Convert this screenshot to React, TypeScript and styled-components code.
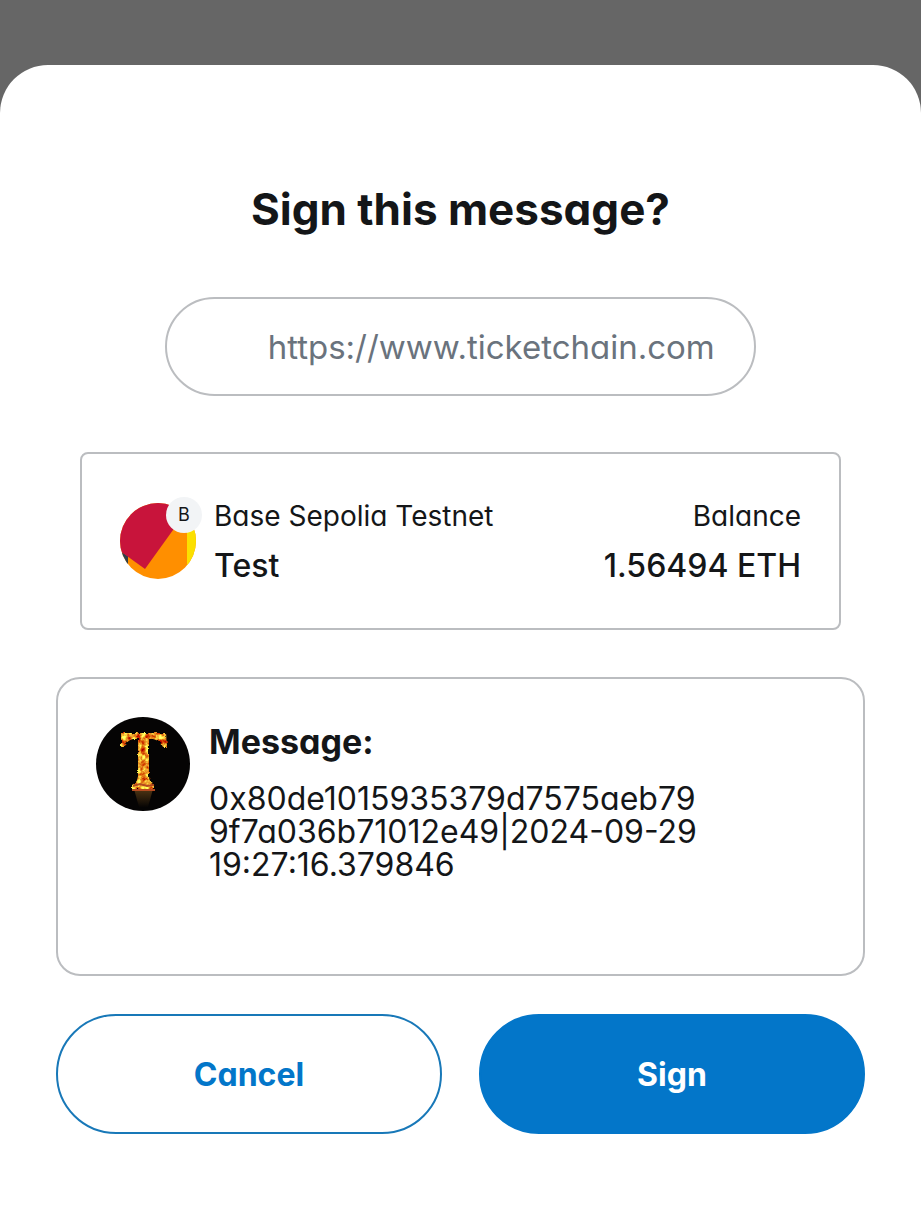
import styled, { createGlobalStyle } from "styled-components";

const GlobalStyle = createGlobalStyle`
  * { box-sizing: border-box; }
  body {
    margin: 0;
    background: #666666;
    color: #141618;
    font-family: Inter, "Liberation Sans", sans-serif;
    font-feature-settings: "cv11";
  }
`;

const Sheet = styled.main`
  display: flex;
  flex-direction: column;
  min-height: calc(100vh - 65px);
  margin-top: 65px;
  padding: 116px 56px 74px;
  background: #ffffff;
  border-radius: 48px 48px 0 0;
`;

const Title = styled.h1`
  margin: 0;
  font-size: 44px;
  line-height: 56px;
  font-weight: 700;
  text-align: center;
`;

const Origin = styled.div`
  align-self: center;
  width: 73%;
  height: 99px;
  margin-top: 60px;
  padding-right: 39px;
  display: flex;
  align-items: center;
  justify-content: flex-end;
  border: 2px solid #bbbdc0;
  border-radius: 50px;
  color: #6a737d;
  font-size: 33px;
`;

const Account = styled.section`
  display: flex;
  align-items: center;
  height: 178px;
  margin: 56px 24px 0;
  padding: 0 38px;
  border: 2px solid #bbbdc0;
  border-radius: 8px;
`;

const Avatar = styled.div`
  position: relative;
  width: 76px;
  height: 76px;
  margin-right: 18px;
  flex: none;

  svg { display: block; }
`;

const NetworkBadge = styled.span`
  position: absolute;
  top: -6px;
  right: -6px;
  width: 36px;
  height: 36px;
  border-radius: 50%;
  background: #f2f4f6;
  font-size: 18px;
  line-height: 36px;
  text-align: center;
`;

const Stack = styled.div<{ $end?: boolean }>`
  flex: ${(p) => (p.$end ? "none" : "1")};
  text-align: ${(p) => (p.$end ? "right" : "left")};
`;

const Label = styled.div`
  font-size: 28px;
  line-height: 50px;
`;

const Value = styled.div`
  font-size: 32px;
  line-height: 50px;
  font-weight: 500;
`;

const MessageCard = styled.section`
  display: flex;
  gap: 19px;
  min-height: 299px;
  margin-top: 47px;
  padding: 38px;
  border: 2px solid #bbbdc0;
  border-radius: 24px;

  svg { flex: none; }
`;

const MessageTitle = styled.h2`
  margin: 0 0 15px;
  font-size: 34px;
  line-height: 50px;
  font-weight: 700;
`;

const MessageText = styled.p`
  margin: 0;
  font-size: 32px;
  line-height: 33px;
  white-space: pre-line;
`;

const Actions = styled.div`
  display: grid;
  grid-template-columns: 1fr 1fr;
  gap: 37px;
  margin-top: 38px;
`;

const Button = styled.button<{ $primary?: boolean }>`
  height: 120px;
  border: 2px solid ${(p) => (p.$primary ? "#0376c9" : "#1878b8")};
  border-radius: 60px;
  background: ${(p) => (p.$primary ? "#0376c9" : "#ffffff")};
  color: ${(p) => (p.$primary ? "#ffffff" : "#0376c9")};
  font: inherit;
  font-size: 32px;
  font-weight: 700;
  cursor: pointer;
`;

const AccountIcon = () => (
  <svg width="76" height="76" viewBox="0 0 76 76" aria-hidden="true">
    <defs>
      <clipPath id="account"><circle cx="38" cy="38" r="38" /></clipPath>
    </defs>
    <g clipPath="url(#account)">
      <path d="M0 0H76V76H0Z" fill="#ff8f00" />
      <path d="M67 0H76V76H67Z" fill="#fbe000" />
      <path d="M0 48L8 53V76H0Z" fill="#30404a" />
      <path d="M-4 45L25 66L76 -5V-10H-4Z" fill="#c8143b" />
    </g>
  </svg>
);

const SiteIcon = () => (
  <svg width="94" height="94" viewBox="0 0 94 94" aria-hidden="true">
    <defs>
      <filter id="flame" x="-20%" y="-20%" width="140%" height="140%" colorInterpolationFilters="sRGB">
        <feTurbulence type="fractalNoise" baseFrequency="0.22" numOctaves="3" seed="4" result="noise" />
        <feColorMatrix in="noise" values="0.6 0 0 0 0.62  2 0 0 0 -0.4  0.9 0 0 0 -0.3  0 0 0 0 1" result="fire" />
        <feDisplacementMap in="SourceGraphic" in2="noise" scale="4" xChannelSelector="R" yChannelSelector="G" result="shape" />
        <feComposite in="fire" in2="shape" operator="in" />
      </filter>
      <linearGradient id="glow" x1="0" y1="0" x2="0" y2="1">
        <stop offset="0" stopColor="#79501c" />
        <stop offset="1" stopColor="#080604" />
      </linearGradient>
    </defs>
    <circle cx="47" cy="47" r="47" fill="#050404" />
    <path d="M38 72H57L52 90H43Z" fill="url(#glow)" opacity="0.65" />
    <path
      d="M25 16H70L71 30H67Q65 24 57 22H53V59Q53 65 58 68V72H36V68Q42 65 42 59V22H37Q30 24 28 30H25Z"
      fill="#ff9b18"
      filter="url(#flame)"
    />
    <path d="M37 69L44 67L51 69L58 68M36 73H59" fill="none" stroke="#b54a20" strokeWidth="2" />
  </svg>
);

const message = `0x80de1015935379d7575aeb79
9f7a036b71012e49|2024-09-29
19:27:16.379846`;

export default function App() {
  return (
    <>
      <GlobalStyle />
      <Sheet>
        <Title>Sign this message?</Title>
        <Origin>https://www.ticketchain.com</Origin>
        <Account>
          <Avatar>
            <AccountIcon />
            <NetworkBadge>B</NetworkBadge>
          </Avatar>
          <Stack>
            <Label>Base Sepolia Testnet</Label>
            <Value>Test</Value>
          </Stack>
          <Stack $end>
            <Label>Balance</Label>
            <Value>1.56494 ETH</Value>
          </Stack>
        </Account>
        <MessageCard>
          <SiteIcon />
          <div>
            <MessageTitle>Message:</MessageTitle>
            <MessageText>{message}</MessageText>
          </div>
        </MessageCard>
        <Actions>
          <Button type="button">Cancel</Button>
          <Button type="button" $primary>Sign</Button>
        </Actions>
      </Sheet>
    </>
  );
}
